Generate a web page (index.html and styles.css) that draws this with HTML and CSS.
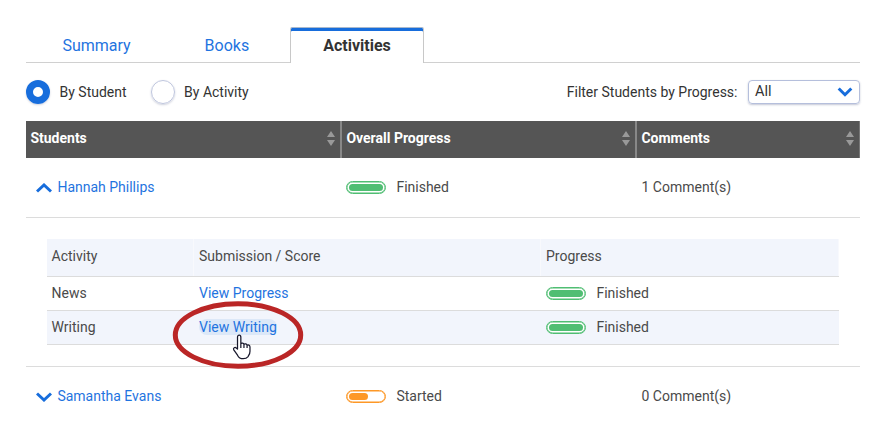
FILE: index.html
```html
<!DOCTYPE html>
<html lang="en">
<head>
<meta charset="utf-8">
<title>Activities</title>
<link rel="stylesheet" href="styles.css">
</head>
<body>
<main class="page">
  <nav class="tabs">
    <a class="tab">Summary</a>
    <a class="tab">Books</a>
    <a class="tab active">Activities</a>
  </nav>
  <div class="toolbar">
    <span class="radio checked"></span><span class="radio-label first">By Student</span>
    <span class="radio"></span><span class="radio-label">By Activity</span>
    <span class="filter-label">Filter Students by Progress:</span>
    <div class="select">All
      <svg width="16" height="10" viewBox="0 0 16 10"><path d="M1.7 1.5L8 7.7l6.3-6.2" fill="none" stroke="#176ddc" stroke-width="3"/></svg>
    </div>
  </div>
  <section class="table">
    <div class="row head">
      <div class="cell">Students<svg class="sort" width="8" height="15" viewBox="0 0 8 15"><path d="M4 0l4 6H0zM0 9h8l-4 6z"/></svg></div>
      <div class="cell">Overall Progress<svg class="sort" width="8" height="15" viewBox="0 0 8 15"><path d="M4 0l4 6H0zM0 9h8l-4 6z"/></svg></div>
      <div class="cell">Comments<svg class="sort" width="8" height="15" viewBox="0 0 8 15"><path d="M4 0l4 6H0zM0 9h8l-4 6z"/></svg></div>
    </div>
    <div class="row student">
      <div class="cell name"><svg class="chevron" width="16" height="10" viewBox="0 0 16 10"><path d="M1 8.5L8 2l7 6.5"/></svg><a class="link">Hannah Phillips</a></div>
      <div class="cell progress"><span class="pill"></span><span>Finished</span></div>
      <div class="cell">1 Comment(s)</div>
    </div>
    <div class="details">
      <div class="activity activity-head"><div>Activity</div><div>Submission / Score</div><div>Progress</div></div>
      <div class="activity"><div>News</div><div><a class="link">View Progress</a></div><div><span class="pill"></span><span>Finished</span></div></div>
      <div class="activity alt"><div>Writing</div>
        <div><span class="target"><a class="link hover">View Writing</a>
          <svg class="ring" width="132" height="70" viewBox="0 0 132 70"><ellipse cx="66" cy="35" rx="62.7" ry="31.3"/></svg>
          <svg class="cursor" width="21" height="27" viewBox="0 0 20 26"><path d="M5.2 14.5V3.1c0-2.6 3.2-2.6 3.2 0v6.3c.5-1 2.7-1 3 .6.8-.8 2.6-.5 3 .8 1-.7 2.8-.2 2.8 1.6v4.1c0 3-1.4 4-1.8 5.2-1.2 1.5-2.8 2.1-4.7 2.1-3 0-4.4-1.1-5.5-3.4L1.6 15.3c-1-2 1.3-3 2.4-1.8zM8.4 9.4v4M11.4 10v3.4M14.4 10.8v2.7"/></svg>
        </span></div>
        <div><span class="pill"></span><span>Finished</span></div></div>
    </div>
    <div class="row student last">
      <div class="cell name"><svg class="chevron" width="16" height="10" viewBox="0 0 16 10"><path d="M1 1.5L8 8l7-6.5"/></svg><a class="link">Samantha Evans</a></div>
      <div class="cell progress"><span class="pill started"></span><span>Started</span></div>
      <div class="cell">0 Comment(s)</div>
    </div>
  </section>
</main>
</body>
</html>
```

FILE: styles.css
```css
* { box-sizing: border-box; }
body { margin: 0; background: #fff; color: #4a4a4a; font: 14px/20px Roboto, sans-serif; overflow: hidden; }
.page { padding: 27px 20px 0 26px; }
.link { color: #1f74e0; }

.tabs { display: flex; gap: 8px; height: 36px; padding-left: 3.4px; border-bottom: 1px solid #d0d0d0; }
.tab { height: 36px; padding: 8px 32px 0; border: 1px solid transparent; border-bottom: 0; font-size: 16px; color: #1f74e0; }
.tab.active { background: #fff; border-color: #aab9cc #c8c8c8 #fff; border-radius: 2px 2px 0 0; box-shadow: inset 0 3px #176ddc; color: #333; font-weight: 700; }

.toolbar { display: flex; align-items: center; height: 58px; color: #333; }
.radio { width: 24px; height: 24px; border: 1px solid #bfc6de; border-radius: 50%; box-shadow: 0 1px 2px rgba(60, 70, 120, .25); }
.radio.checked { border: 7px solid #176ddc; }
.radio-label { margin-left: 9.5px; }
.radio-label.first { margin-right: 24px; }
.filter-label { margin-left: auto; }
.select { display: flex; align-items: center; justify-content: space-between; width: 112px; height: 24px; margin-left: 10.5px; padding: 0 6px; border: 1px solid #b5bfdc; border-radius: 4px; box-shadow: 0 1px 2px rgba(60, 70, 120, .3); font-size: 14.5px; line-height: 22px; }

.row { display: grid; grid-template-columns: 316px 295px 223px; }
.cell { display: flex; align-items: center; padding-left: 4.5px; }
.head { height: 37px; background: #555; color: #fff; font-weight: 700; }
.head .cell { justify-content: space-between; padding: 0 5px 3px 4.4px; border-right: 2px solid #888; }
.head .cell:last-child { border-right: 1px solid #777; }
.sort { fill: #999; margin-top: 1px; }
.student { height: 60px; padding-bottom: 1px; border-bottom: 1px solid #dcdcdc; }
.student.last { height: 59px; border-bottom: 0; }
.student .name { padding-left: 10.4px; }
.student .progress { padding-left: 4px; }
.chevron { margin: 1px 5px 0 0; fill: none; stroke: #176ddc; stroke-width: 3; }

.pill { width: 40px; height: 13px; margin-right: 10.4px; padding: 2px; border: 1px solid #50be73; border-radius: 7px; background: #fff; box-shadow: inset 0 0 0 .5px #50be73; }
.pill::before { content: ""; display: block; height: 7px; border-radius: 4px; background: #50be73; }
.pill.started { border-color: #fd9827; box-shadow: inset 0 0 0 .5px #fd9827; }
.pill.started::before { width: 19px; background: #fd9827; }

.details { height: 149px; padding: 21px 21px 0; border-bottom: 1px solid #dcdcdc; }
.activity { display: grid; grid-template-columns: 147px 347px 298px; height: 34px; border-bottom: 1px solid #dcdcdc; }
.activity > div { display: flex; align-items: center; padding: 0 0 1px 5px; }
.activity > div:first-child { padding-left: 4.5px; }
.activity.alt, .activity-head { background: #f2f5fc; }
.activity-head { height: 38px; }
.activity-head > div { padding-bottom: 3px; border-right: 1px solid #f8f9fd; }

.target { position: relative; }
.hover { border-radius: 8px; background: #dce8f8; }
.ring { position: absolute; left: -27px; top: -17px; fill: none; stroke: #ba2626; stroke-width: 5; }
.cursor { position: absolute; left: 32.5px; top: 16.5px; fill: #fff; stroke: #17172b; stroke-width: 1.2; stroke-linejoin: round; }
```
